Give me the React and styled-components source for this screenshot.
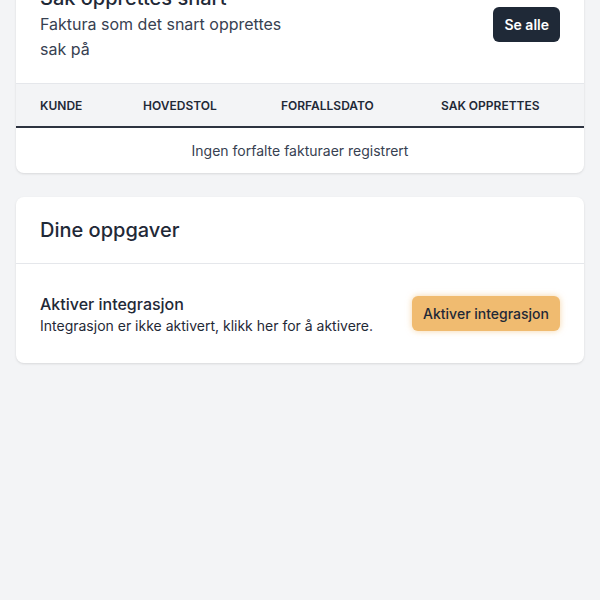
import styled, { createGlobalStyle } from 'styled-components';

const GlobalStyle = createGlobalStyle`
  html, body {
    margin: 0;
    padding: 0;
    background: #f3f4f6;
    font-family: Inter, "Noto Sans", "Liberation Sans", sans-serif;
    color: #1f2937;
  }
  * { box-sizing: border-box; }
`;

const Page = styled.main`
  display: flex;
  flex-direction: column;
  gap: 24px;
  padding: 0 16px 24px;
  margin-top: -40px;
`;

const Card = styled.section`
  background: #fff;
  border-radius: 8px;
  box-shadow: 0 1px 3px rgba(0, 0, 0, 0.08), 0 1px 2px rgba(0, 0, 0, 0.04);
  overflow: hidden;
`;

const CardHeader = styled.header`
  display: flex;
  align-items: center;
  justify-content: space-between;
  padding: ${p => (p.$compact ? '20px 24px' : '24px 24px 22px')};
  border-bottom: 1px solid #e5e7eb;
`;

const HeaderText = styled.div`
  display: flex;
  flex-direction: column;
`;

const Title = styled.h2`
  margin: 0;
  font-size: 20px;
  line-height: ${p => (p.$compact ? '26px' : '28px')};
  font-weight: 500;
  color: #1f2937;
`;

const Subtitle = styled.p`
  margin: 0;
  max-width: 250px;
  font-size: 16px;
  line-height: 24.5px;
  color: #374151;
`;

const DarkButton = styled.button`
  background: #1f2937;
  color: #fff;
  border: none;
  border-radius: 6px;
  padding: 0 11px;
  height: 35px;
  font-family: inherit;
  font-size: 14px;
  font-weight: 600;
  margin-top: 4px;
`;

const Table = styled.table`
  width: 100%;
  border-collapse: collapse;
  table-layout: fixed;
`;

const HeadRow = styled.tr`
  background: #f3f4f6;
  border-bottom: 2px solid #2d3340;
`;

const Th = styled.th`
  text-align: left;
  padding: 0 24px;
  height: 43px;
  font-size: 12px;
  font-weight: 600;
  text-transform: uppercase;
  color: #1f2937;
`;

const EmptyCell = styled.td`
  text-align: center;
  height: 46px;
  font-size: 14px;
  color: #374151;
`;

const TaskRow = styled.div`
  display: flex;
  align-items: center;
  justify-content: space-between;
  padding: 28px 24px 27px;
`;

const TaskText = styled.div`
  display: flex;
  flex-direction: column;
`;

const TaskTitle = styled.div`
  font-size: 16px;
  line-height: 24px;
  font-weight: 500;
  color: #1f2937;
`;

const TaskDesc = styled.div`
  font-size: 14px;
  line-height: 20px;
  color: #1f2937;
`;

const OrangeButton = styled.button`
  background: #f0bb70;
  color: #1f2937;
  border: none;
  border-radius: 6px;
  height: 35px;
  padding: 0 11px;
  margin-bottom: 2px;
  font-family: inherit;
  font-size: 14px;
  font-weight: 500;
  box-shadow: 0 0 6px rgba(240, 187, 112, 0.6);
`;

const columns = [
  { label: 'Kunde', width: 103 },
  { label: 'Hovedstol', width: 138 },
  { label: 'Forfallsdato', width: 160 },
  { label: 'Sak opprettes' },
];

export default function App() {
  return (
    <>
      <GlobalStyle />
      <Page>
        <Card>
          <CardHeader>
            <HeaderText>
              <Title>Sak opprettes snart</Title>
              <Subtitle>Faktura som det snart opprettes sak på</Subtitle>
            </HeaderText>
            <DarkButton>Se alle</DarkButton>
          </CardHeader>
          <Table>
            <colgroup>
              {columns.map(c => (
                <col key={c.label} style={c.width ? { width: c.width } : undefined} />
              ))}
            </colgroup>
            <thead>
              <HeadRow>
                {columns.map(c => (
                  <Th key={c.label}>{c.label}</Th>
                ))}
              </HeadRow>
            </thead>
            <tbody>
              <tr>
                <EmptyCell colSpan={4}>Ingen forfalte fakturaer registrert</EmptyCell>
              </tr>
            </tbody>
          </Table>
        </Card>

        <Card>
          <CardHeader $compact>
            <Title $compact>Dine oppgaver</Title>
          </CardHeader>
          <TaskRow>
            <TaskText>
              <TaskTitle>Aktiver integrasjon</TaskTitle>
              <TaskDesc>Integrasjon er ikke aktivert, klikk her for å aktivere.</TaskDesc>
            </TaskText>
            <OrangeButton>Aktiver integrasjon</OrangeButton>
          </TaskRow>
        </Card>
      </Page>
    </>
  );
}
